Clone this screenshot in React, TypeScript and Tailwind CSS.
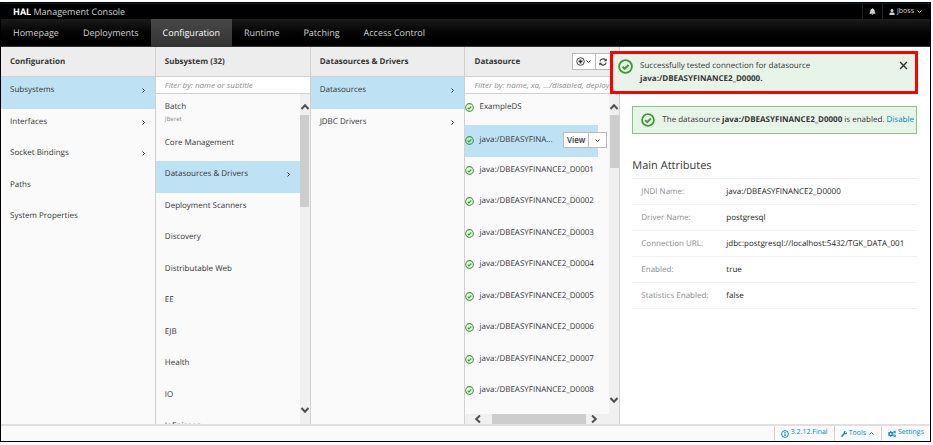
import { ReactNode } from "react";
import clsx from "clsx";
import { FaBell, FaCogs, FaUser, FaWrench } from "react-icons/fa";

const navItems = ["Homepage", "Deployments", "Configuration", "Runtime", "Patching", "Access Control"];

const configurationItems = [
  { label: "Subsystems", next: true, active: true },
  { label: "Interfaces", next: true },
  { label: "Socket Bindings", next: true },
  { label: "Paths" },
  { label: "System Properties" },
];

const subsystemItems = [
  { label: "Batch", subtitle: "JBeret" },
  { label: "Core Management" },
  { label: "Datasources & Drivers", next: true, active: true },
  { label: "Deployment Scanners" },
  { label: "Discovery" },
  { label: "Distributable Web" },
  { label: "EE" },
  { label: "EJB" },
  { label: "Health" },
  { label: "IO" },
  { label: "Infinispan", next: true },
];

const driverItems = [
  { label: "Datasources", next: true, active: true },
  { label: "JDBC Drivers", next: true },
];

const datasources = [
  "ExampleDS",
  "java:/DBEASYFINANCE2_D0000",
  "java:/DBEASYFINANCE2_D0001",
  "java:/DBEASYFINANCE2_D0002",
  "java:/DBEASYFINANCE2_D0003",
  "java:/DBEASYFINANCE2_D0004",
  "java:/DBEASYFINANCE2_D0005",
  "java:/DBEASYFINANCE2_D0006",
  "java:/DBEASYFINANCE2_D0007",
  "java:/DBEASYFINANCE2_D0008",
];

const attributes = [
  ["JNDI Name:", "java:/DBEASYFINANCE2_D0000"],
  ["Driver Name:", "postgresql"],
  ["Connection URL:", "jdbc:postgresql://localhost:5432/TGK_DATA_001"],
  ["Enabled:", "true"],
  ["Statistics Enabled:", "false"],
];

const OkIcon = ({ className }: { className?: string }) => (
  <svg viewBox="0 0 16 16" fill="none" stroke="#3f9c35" strokeWidth="2" className={clsx("shrink-0", className)}>
    <circle cx="8" cy="8" r="6.8" />
    <path d="M4.8 8.2l2.3 2.3 4.2-4.2" strokeWidth="2.2" />
  </svg>
);

const InfoIcon = () => (
  <svg viewBox="0 0 16 16" fill="none" stroke="currentColor" strokeWidth="2" className="size-2">
    <circle cx="8" cy="8" r="6.8" />
    <path d="M8 7v5M8 3.8v2" strokeWidth="2.4" />
  </svg>
);

const AddIcon = () => (
  <svg viewBox="0 0 18 18" fill="none" stroke="currentColor" strokeWidth="1.8" className="size-[9px]">
    <circle cx="9" cy="9" r="7.6" />
    <path d="M9 5v8M5 9h8" strokeWidth="3" />
  </svg>
);

const RefreshIcon = () => (
  <svg viewBox="0 0 16 16" fill="none" stroke="currentColor" strokeWidth="2.2" className="size-2">
    <path d="M1.8 6.8A6.3 6.3 0 0 1 13 4.2M14.2 9.2A6.3 6.3 0 0 1 3 11.8" />
    <path d="M15.4 1v5.6H9.8zM.6 15V9.4h5.6z" fill="currentColor" stroke="none" />
  </svg>
);

const angles = {
  right: "M2.5 1.5l2 2-2 2",
  down: "M1.5 2.5l2 2 2-2",
  up: "M1.5 4.5l2-2 2 2",
};

const Angle = ({ to }: { to: keyof typeof angles }) => (
  <svg viewBox="0 0 7 7" fill="none" stroke="currentColor" strokeWidth="1" className="size-[7px] shrink-0">
    <path d={angles[to]} />
  </svg>
);

const ScrollArrow = ({ d, className }: { d: string; className?: string }) => (
  <svg viewBox="0 0 10 10" fill="none" stroke="#505050" strokeWidth="2" className={clsx("size-[10px] shrink-0", className)}>
    <path d={d} />
  </svg>
);

const VerticalScrollbar = ({ thumb, className }: { thumb: string; className?: string }) => (
  <div className="flex w-[10px] shrink-0 flex-col items-center bg-[#f0f0f0]">
    <ScrollArrow d="M1.5 7L5 3.2 8.5 7" className="mt-2 mb-[3px]" />
    <div className={clsx("w-[9px] bg-[#cdcdcd]", thumb)} />
    <ScrollArrow d="M1.5 3L5 6.8 8.5 3" className={clsx("mt-auto", className)} />
  </div>
);

const Column = ({ title, actions, children }: { title: string; actions?: ReactNode; children: ReactNode }) => (
  <section className="flex w-1/6 shrink-0 flex-col border-r border-[#d1d1d1] bg-[#fafafa]">
    <header className="flex h-[30px] shrink-0 items-center justify-between border-b border-[#d1d1d1] bg-[#ededed] pl-[9px]">
      <h2 className="font-bold whitespace-nowrap">{title}</h2>
      {actions}
    </header>
    {children}
  </section>
);

const Filter = ({ label, placeholder }: { label: string; placeholder: string }) => (
  <input
    type="text"
    aria-label={label}
    placeholder={placeholder}
    className="h-[17px] w-full shrink-0 border-b border-[#d1d1d1] bg-white pb-[2px] pl-[9px] italic outline-none placeholder:text-[#8b8b8b]"
  />
);

type Item = { label: string; subtitle?: string; next?: boolean; active?: boolean };

const ItemList = ({ items }: { items: Item[] }) => (
  <ul className="min-w-0 flex-1 overflow-hidden">
    {items.map(({ label, subtitle, next, active }) => (
      <li
        key={label}
        className={clsx(
          "pt-[7px] pr-2 pl-[9px]",
          subtitle ? "h-9" : "h-[31px] odd:h-8",
          active && "bg-[#bee1f4]"
        )}
      >
        <a href="#" className="flex items-center justify-between leading-3">
          <span>{label}</span>
          {next && <Angle to="right" />}
        </a>
        {subtitle && <p className="text-[6px] leading-3 text-[#8b8d8f]">{subtitle}</p>}
      </li>
    ))}
  </ul>
);

const DatasourceList = () => (
  <ul className="min-w-0 flex-1 overflow-hidden">
    {datasources.map((name, i) => (
      <li
        key={name}
        className={clsx("mr-[11px] h-[31px] pt-[7px] even:h-8", i === 1 && "bg-[#bee1f4]")}
      >
        <div className="flex items-center leading-3">
          <OkIcon className="mr-[5px] size-[9px]" />
          {i === 1 ? (
            <>
              <a href="#" title={name}>java:/DBEASYFINA...</a>
              <div className="-mr-[9px] ml-auto flex h-4 shrink-0 divide-x divide-[#bbb] border border-[#bbb] bg-white font-semibold">
                <button className="px-[3px]">View</button>
                <button aria-label="More actions" className="px-[5px]">
                  <Angle to="down" />
                </button>
              </div>
            </>
          ) : (
            <a href="#">{name}</a>
          )}
        </div>
      </li>
    ))}
  </ul>
);

const TopBar = () => (
  <div className="flex h-4 shrink-0 items-center justify-between border-t border-[#0b1d28] bg-black pl-3 text-[#d1d1d1]">
    <h1 className="text-[9px]">
      <b className="text-white">HAL</b> Management Console
    </h1>
    <div className="flex h-full divide-x divide-[#222] border-l border-[#222]">
      <button aria-label="Notifications" className="px-[6px]">
        <FaBell className="size-[7px]" />
      </button>
      <button className="flex items-center gap-[2px] pr-[7px] pl-[6px] text-[7px]">
        <FaUser className="size-[6px]" />
        jboss
        <Angle to="down" />
      </button>
    </div>
  </div>
);

const NavBar = () => (
  <nav className="flex h-7 shrink-0 border-b border-[#333] bg-linear-to-b from-[#1c1c1c] to-black text-[9px] text-[#d1d1d1]">
    {navItems.map((item) => (
      <a
        key={item}
        href="#"
        className={clsx(
          "flex items-center px-3",
          item === "Configuration" && "bg-linear-to-b from-[#484848] to-[#333] text-white"
        )}
      >
        {item}
      </a>
    ))}
  </nav>
);

const Toast = () => (
  <div
    role="alert"
    className="absolute top-[48px] right-3 flex h-[43px] w-[308px] items-start border-[3px] border-[#f00] bg-[#e9f4e9] pt-[5px] pr-[7px] pl-[5px]"
  >
    <OkIcon className="mr-[7px] size-[15px]" />
    <p className="flex-1 leading-[13px]">
      Successfully tested connection for datasource
      <br />
      <b>java:/DBEASYFINANCE2_D0000.</b>
    </p>
    <button aria-label="Close" className="pt-[2px]">
      <svg viewBox="0 0 10 10" fill="none" stroke="#363636" strokeWidth="1.6" className="size-[9px]">
        <path d="M1.2 1.2l7.6 7.6M8.8 1.2L1.2 8.8" />
      </svg>
    </button>
  </div>
);

const Preview = () => (
  <main className="min-w-0 flex-1 bg-white pt-[59px] pr-[13px] pl-3">
    <div className="flex h-7 items-center border border-[#89c684] bg-[#e9f4e9] pl-2">
      <OkIcon className="mr-[7px] size-[14px]" />
      <p className="whitespace-nowrap">
        The datasource <b>java:/DBEASYFINANCE2_D0000</b> is enabled.{" "}
        <a href="#" className="text-[#0088ce]">Disable</a>
      </p>
    </div>
    <h2 className="mt-6 text-[11px] leading-4">Main Attributes</h2>
    <table className="mt-1 w-full border-t border-[#ededed] text-left">
      <tbody>
        {attributes.map(([label, value]) => (
          <tr key={label} className="h-[26px] border-b border-[#f1f1f1]">
            <th className="w-[94px] pl-[9px] font-normal text-[#8b8d8f]">{label}</th>
            <td className="text-[#222]">{value}</td>
          </tr>
        ))}
      </tbody>
    </table>
  </main>
);

const Footer = () => (
  <footer className="flex h-[17px] shrink-0 justify-end divide-x divide-[#d1d1d1] border-t-2 border-[#e0e0e0] bg-[#fafafa] text-[7px] text-[#0088ce]">
    <a href="#" className="flex items-center gap-[2px] border-l border-[#d1d1d1] px-[6px]">
      <InfoIcon />
      3.2.12.Final
    </a>
    <button className="flex items-center gap-[2px] px-[6px]">
      <FaWrench className="size-[6px]" />
      Tools
      <Angle to="up" />
    </button>
    <a href="#" className="flex items-center gap-[2px] px-[6px]">
      <FaCogs className="size-2" />
      Settings
    </a>
  </footer>
);

const App = () => {
  return (
    <div className="h-screen bg-white pt-[2px] pr-[2px] pb-[3px] font-['Open_Sans',sans-serif] text-[8px] text-[#363636] [text-rendering:geometricPrecision]">
      <div className="relative flex h-full flex-col border border-black">
        <TopBar />
        <NavBar />
        <div className="flex min-h-0 flex-1">
          <Column title="Configuration">
            <ItemList items={configurationItems} />
          </Column>
          <Column title="Subsystem (32)">
            <Filter label="Filter subsystems" placeholder="Fiter by: name or subtitle" />
            <div className="flex min-h-0 flex-1">
              <ItemList items={subsystemItems} />
              <VerticalScrollbar thumb="h-[92px]" className="mb-[9px]" />
            </div>
          </Column>
          <Column title="Datasources & Drivers">
            <ItemList items={driverItems} />
          </Column>
          <Column
            title="Datasource"
            actions={
              <div className="mr-2 flex h-[17px] divide-x divide-[#bbb] border border-[#bbb] bg-white">
                <button aria-label="Add datasource" className="flex items-center px-[3px]">
                  <AddIcon />
                  <Angle to="down" />
                </button>
                <button aria-label="Refresh" className="px-[3px]">
                  <RefreshIcon />
                </button>
              </div>
            }
          >
            <Filter label="Filter datasources" placeholder="Filter by: name, xa, .../disabled, deployment" />
            <div className="flex min-h-0 flex-1">
              <DatasourceList />
              <VerticalScrollbar thumb="h-[53px]" className="mb-[9px]" />
            </div>
            <div className="flex h-[10px] shrink-0 items-center bg-[#f0f0f0] pr-5 pl-2">
              <ScrollArrow d="M7 1.5L3.2 5 7 8.5" className="mr-[9px]" />
              <div className="h-full flex-1 bg-[#cdcdcd]" />
              <ScrollArrow d="M3 1.5L6.8 5 3 8.5" className="ml-[3px]" />
            </div>
          </Column>
          <Preview />
        </div>
        <Footer />
        <Toast />
      </div>
    </div>
  );
};

export default App;
